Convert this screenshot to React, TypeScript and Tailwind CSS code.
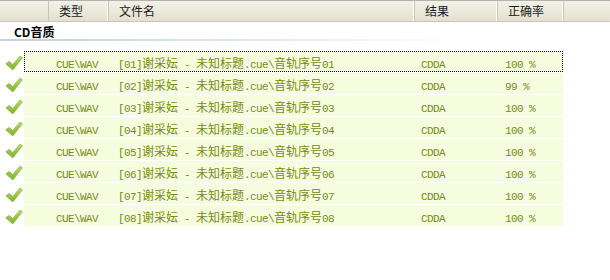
import React from "react";

const rows = [
  { n: "01", p: "100 %" },
  { n: "02", p: "99 %" },
  { n: "03", p: "100 %" },
  { n: "04", p: "100 %" },
  { n: "05", p: "100 %" },
  { n: "06", p: "100 %" },
  { n: "07", p: "100 %" },
  { n: "08", p: "100 %" },
];

function Mixed({ text }: { text: string }) {
  const parts = text.match(/[\x00-\x7f]+|[^\x00-\x7f]+/g) || [];
  return (
    <>
      {parts.map((p, i) =>
        /^[\x00-\x7f]+$/.test(p) ? (
          <span
            key={i}
            className="whitespace-pre text-[11px] tracking-[-0.6px] [font-family:'Liberation_Mono',monospace]"
          >
            {p}
          </span>
        ) : (
          <span key={i} className="text-[12px] [font-family:'Noto_Sans_CJK_SC',sans-serif]">
            {p}
          </span>
        )
      )}
    </>
  );
}

function Check() {
  return (
    <svg width="18" height="16" viewBox="0 0 18 16">
      <defs>
        <linearGradient id="cg" x1="0" y1="0" x2="0" y2="1">
          <stop offset="0" stopColor="#b8df60" />
          <stop offset="1" stopColor="#7fae2c" />
        </linearGradient>
      </defs>
      <path
        d="M0.8 8.8 L4.2 6.4 L7.6 9.6 L15.2 1 L17.4 2.8 L7.8 15 Z"
        fill="url(#cg)"
        stroke="#86b036"
        strokeWidth="0.7"
        strokeLinejoin="round"
      />
    </svg>
  );
}

function HeaderCell({ w, label }: { w: string; label?: string }) {
  return (
    <div className={`${w} flex h-full items-center border-r border-r-[#c9c6b3] shadow-[inset_-1px_0_0_#ffffff] pl-[10px]`}>
      {label && (
        <span className="text-[12px] text-[#1a1a1a] [font-family:'Noto_Sans_CJK_SC',sans-serif]">{label}</span>
      )}
    </div>
  );
}

export default function App() {
  return (
    <div className="w-[610px] h-[280px] bg-white overflow-hidden relative">
      <div className="h-[22px] flex bg-gradient-to-b from-[#f2f1e9] via-[#ebeadb] to-[#e2dfcf] border-t border-t-[#b5b3a8] border-b border-b-[#cbc7b8]">
        <div className="w-[49px] h-full border-r border-r-[#c9c6b3]" />
        <HeaderCell w="w-[60px]" label="类型" />
        <HeaderCell w="w-[306px]" label="文件名" />
        <HeaderCell w="w-[83px]" label="结果" />
        <HeaderCell w="w-[66px]" label="正确率" />
        <div className="flex-1" />
      </div>
      <div className="pl-[14px] pt-[1px] h-[17px] text-[12px] font-bold text-black leading-[17px] [font-family:'Noto_Sans_CJK_SC',sans-serif]">
        CD音质
      </div>
      <div className="h-[2px] w-[460px] bg-gradient-to-r from-[#c5cfda] via-[#dfe5ec] to-white" />
      <div className="pt-[10px] flex flex-col gap-[1px]">
        {rows.map((r, i) => (
          <div key={r.n} className="flex items-center h-[21px]">
            <div className="w-[24px] flex justify-center pl-[3px] pt-[2px]">
              <Check />
            </div>
            <div
              className={`w-[539px] h-full flex items-center bg-[#f6fddf] text-[#768a1a] ${
                i === 0 ? "border border-dotted border-black" : "border border-transparent"
              }`}
            >
              <div className="w-[93px] pl-[31px] whitespace-nowrap">
                <Mixed text={"CUE\\WAV"} />
              </div>
              <div className="w-[303px] whitespace-nowrap">
                <Mixed text={`[${r.n}]谢采妘 - 未知标题.cue\\音轨序号${r.n}`} />
              </div>
              <div className="w-[84px] whitespace-nowrap">
                <Mixed text="CDDA" />
              </div>
              <div className="whitespace-nowrap">
                <Mixed text={r.p} />
              </div>
            </div>
          </div>
        ))}
      </div>
    </div>
  );
}
